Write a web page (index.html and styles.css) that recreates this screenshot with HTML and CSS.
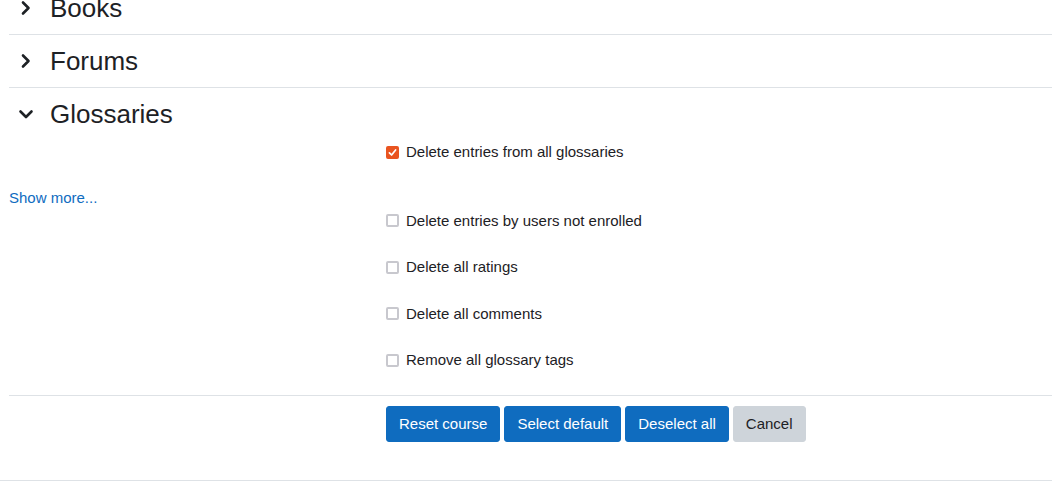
FILE: index.html
```html
<!DOCTYPE html>
<html>
<head>
<meta charset="utf-8">
<link rel="stylesheet" href="styles.css">
</head>
<body>
<div class="page">
  <div class="section first">
    <div class="sec-head">
      <svg class="chev" viewBox="0 0 16 16"><polyline points="5,2.5 10.5,8 5,13.5"/></svg>
      <h3>Books</h3>
    </div>
  </div>
  <div class="section">
    <div class="sec-head">
      <svg class="chev" viewBox="0 0 16 16"><polyline points="5,2.5 10.5,8 5,13.5"/></svg>
      <h3>Forums</h3>
    </div>
  </div>
  <div class="section open">
    <div class="sec-head">
      <svg class="chev" viewBox="0 0 16 16"><polyline points="2.5,5.5 8,11 13.5,5.5"/></svg>
      <h3>Glossaries</h3>
    </div>
    <div class="sec-body">
      <div class="row first-row">
        <div class="lab"></div>
        <label class="check"><input type="checkbox" checked> Delete entries from all glossaries</label>
      </div>
      <div class="row more-row">
        <div class="lab"><a href="#" class="more">Show more...</a></div>
        <div></div>
      </div>
      <div class="row">
        <div class="lab"></div>
        <label class="check"><input type="checkbox"> Delete entries by users not enrolled</label>
      </div>
      <div class="row">
        <div class="lab"></div>
        <label class="check"><input type="checkbox"> Delete all ratings</label>
      </div>
      <div class="row">
        <div class="lab"></div>
        <label class="check"><input type="checkbox"> Delete all comments</label>
      </div>
      <div class="row">
        <div class="lab"></div>
        <label class="check"><input type="checkbox"> Remove all glossary tags</label>
      </div>
    </div>
  </div>
  <div class="actions">
    <div class="lab"></div>
    <div class="btns">
      <button class="btn primary">Reset course</button>
      <button class="btn primary">Select default</button>
      <button class="btn primary">Deselect all</button>
      <button class="btn secondary">Cancel</button>
    </div>
  </div>
</div>
<div class="footer"></div>
</body>
</html>
```
FILE: styles.css
```css
* { box-sizing: border-box; }
html, body { margin: 0; padding: 0; }
body {
  font-family: "Liberation Sans", Arial, sans-serif;
  font-size: 15px;
  line-height: 1.5;
  color: #1d2125;
  background: #fff;
  overflow: hidden;
  height: 482px;
}
.page {
  padding-left: 9px;
  margin-top: -18px;
}
.section {
  border-bottom: 1px solid #dee2e6;
}
.section.open { border-bottom: none; }
.sec-head {
  display: flex;
  align-items: center;
  padding: 11px 0 11px 9px;
}
.chev {
  width: 16px;
  height: 16px;
  margin-right: 16px;
  flex: none;
}
.chev polyline {
  fill: none;
  stroke: #1d2125;
  stroke-width: 2.6;
  stroke-linecap: round;
  stroke-linejoin: round;
}
h3 {
  margin: 0;
  font-size: 26px;
  font-weight: 400;
  line-height: 30px;
}
.sec-body {
  padding-top: 1px;
  padding-bottom: 23px;
  border-bottom: 1px solid #dee2e6;
}
.row {
  display: grid;
  grid-template-columns: 377px 1fr;
  min-height: 22.5px;
  margin-bottom: 24px;
}
.row.first-row { margin-bottom: 23.5px; }
.row.more-row { margin-bottom: 0; }
.row:last-child { margin-bottom: 0; }
.check {
  display: flex;
  align-items: center;
  gap: 7px;
}
.check input {
  -webkit-appearance: none;
  appearance: none;
  margin: 0;
  width: 13px;
  height: 13px;
  border: 2px solid #c8c8ce;
  border-radius: 2px;
  background: #fff;
  flex: none;
}
.check input:checked {
  border-color: #e95420;
  background-color: #e95420;
  background-image: url("data:image/svg+xml,%3Csvg xmlns='http://www.w3.org/2000/svg' viewBox='0 0 9 9'%3E%3Cpolyline points='1.4,4.8 3.6,7 7.6,1.9' fill='none' stroke='white' stroke-width='1.7' stroke-linecap='round' stroke-linejoin='round'/%3E%3C/svg%3E");
  background-size: 9px 9px;
  background-position: center;
  background-repeat: no-repeat;
}
.more {
  color: #0f6cbf;
  text-decoration: none;
}
.actions {
  display: grid;
  grid-template-columns: 377px 1fr;
  padding-top: 10px;
}
.btns {
  display: flex;
  gap: 4px;
}
.btn {
  font-family: inherit;
  font-size: 15px;
  line-height: 22.5px;
  padding: 6px 12px;
  border: 1px solid transparent;
  border-radius: 3px;
  height: 36px;
}
.btn.primary {
  background: #0f6cbf;
  border-color: #0f6cbf;
  color: #fff;
}
.btn.secondary {
  background: #ced4da;
  border-color: #ced4da;
  color: #1d2125;
}
.footer {
  margin-top: 38px;
  border-top: 1px solid #dee2e6;
}
```
